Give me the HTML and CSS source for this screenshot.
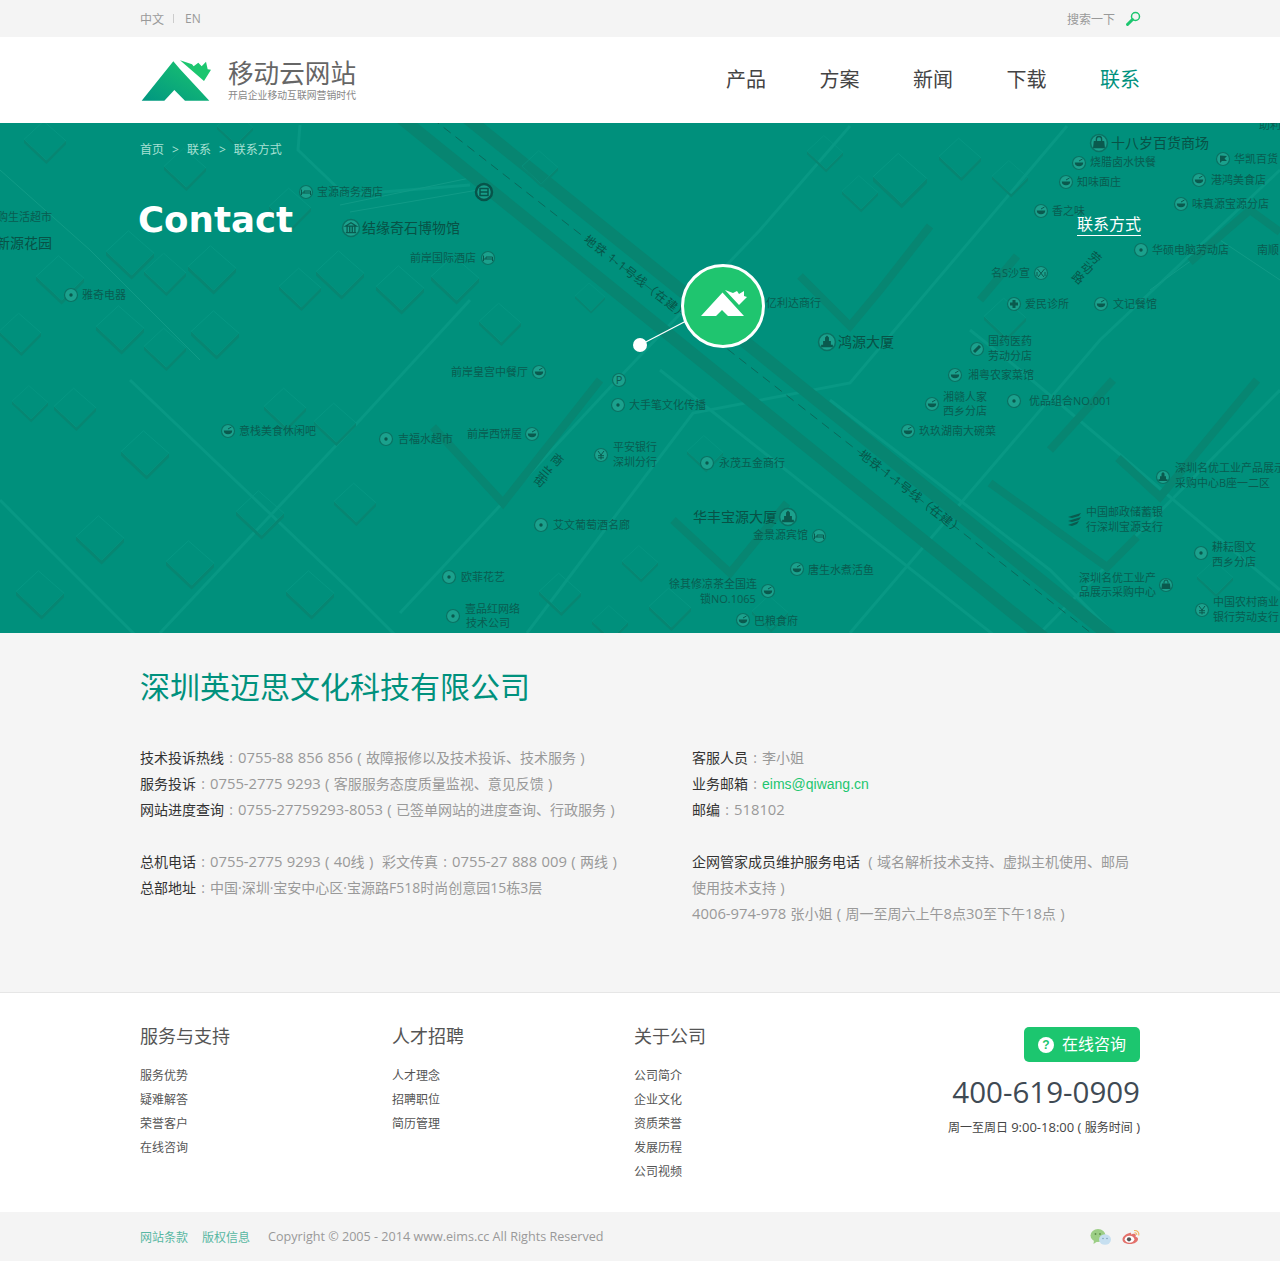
FILE: index.html
```html
<!DOCTYPE html>
<html lang="zh-CN">
<head>
<meta charset="utf-8">
<title>联系方式 - 移动云网站</title>
<link rel="stylesheet" href="styles.css">
</head>
<body>
<div class="topbar">
  <div class="wrap topbar-in">
    <div class="lang"><a>中文</a><i class="sep"></i><a>EN</a></div>
    <div class="search"><span>搜索一下</span>
      <svg class="search-ico" width="16" height="16" viewBox="0 0 16 16"><circle cx="10.500" cy="5.500" r="4" fill="none" stroke="#1cc66f" stroke-width="1.500"/><path d="M7.500 8.500L2.500 13.500" stroke="#1cc66f" stroke-width="3" stroke-linecap="round"/></svg>
    </div>
  </div>
</div>
<header class="header">
  <div class="wrap header-in">
    <a class="logo">
      <svg class="logo-mark" width="72" height="44" viewBox="33 174 216 132">
        <defs><linearGradient id="lg" x1="0" y1="1" x2="1" y2="0"><stop offset="0" stop-color="#009681"/><stop offset="1" stop-color="#1cc66f"/></linearGradient></defs>
        <path fill="url(#lg)" d="M35 299L130 181L149 203L238 299H165L133 267L103 299Z"/>
        <path fill="#1cc66f" d="M150 178L186 190L191 196L205 185L215 196L228 182L233 205L243 206L222 240Z"/>
      </svg>
      <span class="logo-text"><b>移动云网站</b><small>开启企业移动互联网营销时代</small></span>
    </a>
    <nav class="nav"><a>产品</a><a>方案</a><a>新闻</a><a>下载</a><a class="on">联系</a></nav>
  </div>
</header>

<section class="hero">
  <svg class="map" width="1280" height="510" viewBox="0 123 1280 510">
    <defs>
      <g id="b"><path class="b-top" d="M-2 -24L30 4L2 32L-30 2Z"/><path class="b-edge" d="M-30 2V7L2 37L30 9V4L2 32Z"/></g>
      <g id="ic"><circle r="6.500" class="ic-c"/></g>
      <g id="dot"><use href="#ic"/><circle r="1.700" class="gl"/></g>
      <g id="bowl"><use href="#ic"/><path class="gl" d="M-4.200 -.5H4.200A4.200 3.800 0 0 1 -4.200 -.5Z"/><path class="gl-s" d="M0 -2L3.500 -4"/></g>
      <g id="bed"><use href="#ic"/><path class="gl-s" d="M-4.500 -2.500V3M-4.500 1H4.500V3M4.500 1V-1H-2V1"/></g>
      <g id="bldg"><use href="#ic"/><path class="gl" d="M-4.500 4H4.500V2.200H3V-.8H1.500V-3.500L0 -5L-1.500 -3.500V-.8H-3V2.200H-4.500Z"/></g>
      <g id="muse"><use href="#ic"/><path class="gl-s" d="M-4 -1.500L0 -4L4 -1.500ZM-3 -1V3M-1 -1V3M1 -1V3M3 -1V3M-4 3.500H4"/></g>
      <g id="bag"><use href="#ic"/><path class="gl" d="M-4 -1.500H4L4.600 4H-4.600Z"/><path class="gl-s" d="M-2 -1.500V-3A2 2 0 0 1 2 -3V-1.500"/></g>
      <g id="plus"><use href="#ic"/><path class="gl" d="M-1.500 -4H1.500V-1.500H4V1.500H1.500V4H-1.500V1.500H-4V-1.500H-1.500Z"/></g>
      <g id="pill"><use href="#ic"/><path d="M-3 3L3 -3" class="gl-w"/></g>
      <g id="yen"><use href="#ic"/><path class="gl-s" d="M-3 -4L0 0L3 -4M0 0V4.500M-3 .7H3M-3 2.800H3"/></g>
      <g id="flag"><use href="#ic"/><path class="gl" d="M-3 -3.500L4 -3L1.500 -.5L4 2H-1L-3 4Z"/></g>
      <g id="scis"><use href="#ic"/><path class="gl-s" d="M-3.500 -4L3 4M3.500 -4L-3 4M-4 -1V3M4 -1V3"/></g>
      <g id="bus"><circle r="8" class="ic-bus"/><path class="gl-b" d="M-4 -3.500H4V3.500H-4ZM-4 0H4"/></g>
    </defs>

    <g class="road-l">
      <polyline points="400,613 617,380 760,230 850,126"/>
      <polyline points="527,633 693,413 850,383 1067,126"/>
      <polyline points="850,633 1100,340 1280,170"/>
      <polyline points="1040,633 1280,390"/>
      <polyline points="160,633 360,420 470,300"/>
      <polyline points="130,380 350,590 400,640"/>
      <polyline points="0,500 100,600 140,640"/>
      <polyline points="660,370 1000,640"/>
      <polyline points="830,400 1050,570 1120,640"/>
      <polyline points="970,330 1020,370 1280,590"/>
      <polyline points="300,125 298,150 345,195 470,185"/>
    </g>
    <g class="road-t">
      <polyline points="340,205 470,178"/>
      <polyline points="350,212 478,190"/>
      <polyline points="1150,290 1220,240 1280,280"/>
      <polyline points="0,170 90,250 200,360"/>
    </g>

    <g class="band">
      <line x1="400" y1="64" x2="1120" y2="644"/>
      <line x1="380" y1="101" x2="1070" y2="659"/>
    </g>
    <line class="dash" x1="420" y1="109" x2="1100" y2="640"/>

    <g class="wall">
      <polyline points="433,427 503,503 600,380"/>
      <polyline points="673,520 730,573 787,503"/>
      <polyline points="800,276 850,326 880,290 930,226"/>
      <polyline points="980,300 1017,256"/>
      <polyline points="990,483 1107,567 1137,537"/>
      <polyline points="1050,450 1113,380"/>
      <polyline points="1118,458 1160,497 1257,380"/>
      <polyline points="1190,262 1250,210 1280,232"/>
    </g>
    <g>
      <use href="#b" transform="translate(45,138) scale(.7)"/><use href="#b" transform="translate(185,165) scale(.7)"/>
      <use href="#b" transform="translate(235,125) scale(.6)"/><use href="#b" transform="translate(290,205) scale(.7)"/>
      <use href="#b" transform="translate(130,250) scale(.8)"/><use href="#b" transform="translate(165,270) scale(.7)"/>
      <use href="#b" transform="translate(212,265) scale(.8)"/><use href="#b" transform="translate(60,275) scale(.8)"/>
      <use href="#b" transform="translate(20,330) scale(.7)"/><use href="#b" transform="translate(120,325) scale(.8)"/>
      <use href="#b" transform="translate(165,345) scale(.7)"/><use href="#b" transform="translate(215,330) scale(.8)"/>
      <use href="#b" transform="translate(300,285) scale(.7)"/><use href="#b" transform="translate(340,270) scale(.8)"/>
      <use href="#b" transform="translate(400,285) scale(.8)"/><use href="#b" transform="translate(455,275) scale(.8)"/>
      <use href="#b" transform="translate(500,320) scale(.7)"/><use href="#b" transform="translate(75,405) scale(.7)"/>
      <use href="#b" transform="translate(30,400) scale(.6)"/><use href="#b" transform="translate(145,450) scale(.8)"/>
      <use href="#b" transform="translate(285,405) scale(.7)"/><use href="#b" transform="translate(335,420) scale(.7)"/>
      <use href="#b" transform="translate(355,500) scale(.7)"/><use href="#b" transform="translate(260,510) scale(.8)"/>
      <use href="#b" transform="translate(190,560) scale(.8)"/><use href="#b" transform="translate(100,535) scale(.8)"/>
      <use href="#b" transform="translate(40,590) scale(.8)"/><use href="#b" transform="translate(310,590) scale(.8)"/>
      <use href="#b" transform="translate(540,165) scale(.6)"/><use href="#b" transform="translate(590,295) scale(.5)"/>
      <use href="#b" transform="translate(560,590) scale(.7)"/><use href="#b" transform="translate(640,560) scale(.6)"/>
      <use href="#b" transform="translate(670,605) scale(.7)"/><use href="#b" transform="translate(770,610) scale(.6)"/>
      <use href="#b" transform="translate(705,450) scale(.6)"/><use href="#b" transform="translate(610,620) scale(.6)"/>
      <use href="#b" transform="translate(900,175) scale(.9)"/><use href="#b" transform="translate(860,190) scale(.6)"/>
      <use href="#b" transform="translate(960,155) scale(.7)"/><use href="#b" transform="translate(825,150) scale(.6)"/>
      <use href="#b" transform="translate(1005,315) scale(.7)"/><use href="#b" transform="translate(1010,175) scale(.6)"/>
      <use href="#b" transform="translate(1215,575) scale(.6)"/>
    </g>

    <use href="#bed" x="306" y="192"/><use href="#bus" x="484" y="192"/>
    <use href="#muse" transform="translate(351,228) scale(1.300)"/><use href="#bed" x="488" y="258"/>
    <use href="#bag" transform="translate(1099,143) scale(1.300)"/><use href="#bowl" x="1079" y="163"/>
    <use href="#bowl" x="1066" y="182"/><use href="#flag" x="1223" y="159"/>
    <use href="#bowl" x="1199" y="180"/><use href="#bowl" x="1181" y="204"/>
    <use href="#bowl" x="1041" y="211"/><use href="#dot" x="1141" y="250"/>
    <use href="#scis" x="1041" y="273"/><use href="#plus" x="1014" y="304"/>
    <use href="#bowl" x="1101" y="304"/><use href="#bldg" transform="translate(827,342) scale(1.300)"/>
    <use href="#pill" x="977" y="349"/><use href="#bowl" x="955" y="375"/>
    <use href="#bowl" x="932" y="404"/><use href="#dot" x="1014" y="401"/>
    <use href="#bowl" x="908" y="431"/><use href="#dot" x="71" y="295"/>
    <use href="#bowl" x="539" y="372"/><use href="#dot" x="618" y="405"/>
    <use href="#bowl" x="228" y="431"/><use href="#dot" x="386" y="439"/>
    <use href="#bowl" x="532" y="434"/><use href="#yen" x="601" y="455"/>
    <use href="#dot" x="707" y="463"/><use href="#dot" x="541" y="525"/>
    <use href="#bldg" transform="translate(788,517) scale(1.300)"/><use href="#bed" x="819" y="536"/>
    <use href="#bowl" x="797" y="569"/><use href="#bowl" x="768" y="591"/>
    <use href="#bowl" x="743" y="620"/><use href="#dot" x="449" y="577"/>
    <use href="#dot" x="453" y="616"/><use href="#bldg" x="1163" y="477"/>
    <use href="#dot" x="1201" y="553"/><use href="#bag" x="1166" y="585"/>
    <use href="#yen" x="1202" y="610"/><use href="#ic" x="619" y="380"/>
    <path class="gl" d="M1068 517L1081 513L1079 516L1072 518ZM1068 521L1081 517L1079 520L1072 522ZM1068 525L1079 521L1077 524L1072 526Z"/>

    <g class="lb">
      <text x="619" y="384" text-anchor="middle">P</text>
      <text x="317" y="196">宝源商务酒店</text><text x="410" y="262">前岸国际酒店</text>
      <text x="1090" y="166">烧腊卤水快餐</text><text x="1077" y="186">知味面庄</text>
      <text x="1234" y="163">华凯百货</text><text x="1211" y="184">港鸿美食店</text>
      <text x="1192" y="208">味真源宝源分店</text><text x="1052" y="215">香之味</text>
      <text x="1152" y="254">华硕电脑劳动店</text><text x="1257" y="254">南顺</text>
      <text x="991" y="277">名S沙宣</text><text x="1025" y="308">爱民诊所</text>
      <text x="1113" y="308">文记餐馆</text><text x="988" y="345">国药医药</text>
      <text x="988" y="360">劳动分店</text><text x="968" y="379">湘粤农家菜馆</text>
      <text x="943" y="401">湘赣人家</text><text x="943" y="415">西乡分店</text>
      <text x="1029" y="405">优品组合NO.001</text><text x="919" y="435">玖玖湖南大碗菜</text>
      <text x="-3" y="221">购生活超市</text><text x="82" y="299">雅奇电器</text>
      <text x="766" y="307">亿利达商行</text><text x="451" y="376">前岸皇宫中餐厅</text>
      <text x="629" y="409">大手笔文化传播</text><text x="239" y="435">意栈美食休闲吧</text>
      <text x="398" y="443">吉福水超市</text><text x="467" y="438">前岸西饼屋</text>
      <text x="613" y="451">平安银行</text><text x="613" y="466">深圳分行</text>
      <text x="719" y="467">永茂五金商行</text><text x="553" y="529">艾文葡萄酒名廊</text>
      <text x="753" y="539">金景源宾馆</text><text x="808" y="574">唐生水煮活鱼</text>
      <text x="669" y="588">徐其修凉茶全国连</text><text x="700" y="603">锁NO.1065</text>
      <text x="754" y="625">巴粮食府</text><text x="461" y="581">欧菲花艺</text>
      <text x="465" y="613">壹品红网络</text><text x="466" y="627">技术公司</text>
      <text x="1175" y="472">深圳名优工业产品展示</text><text x="1175" y="487">采购中心B座一二区</text>
      <text x="1086" y="516">中国邮政储蓄银</text><text x="1086" y="531">行深圳宝源支行</text>
      <text x="1212" y="551">耕耘图文</text><text x="1212" y="566">西乡分店</text>
      <text x="1079" y="582">深圳名优工业产</text><text x="1079" y="596">品展示采购中心</text>
      <text x="1213" y="606">中国农村商业</text><text x="1213" y="621">银行劳动支行</text>
      <text x="1259" y="129">助利</text>
    </g>
    <g class="lb-big">
      <text x="362" y="233">结缘奇石博物馆</text><text x="1111" y="148">十八岁百货商场</text>
      <text x="838" y="347">鸿源大厦</text><text x="-4" y="248">新源花园</text>
      <text x="693" y="522">华丰宝源大厦</text>
    </g>
    <g class="lb-road">
      <text class="spaced" transform="translate(583,241) rotate(38)">地铁 1-1号线（在建）</text>
      <text class="spaced" transform="translate(858,456) rotate(38)">地铁 1-1号线（在建）</text>
      <text transform="translate(1092.400,261) rotate(40)" text-anchor="middle">劳</text>
      <text transform="translate(1084.400,271) rotate(40)" text-anchor="middle">动</text>
      <text transform="translate(1075.400,281) rotate(40)" text-anchor="middle">路</text>
      <text transform="translate(554.400,463) rotate(40)" text-anchor="middle">商</text>
      <text transform="translate(543.400,475) rotate(40)" text-anchor="middle">兰</text>
      <text transform="translate(537.400,484) rotate(40)" text-anchor="middle">街</text>
    </g>
  </svg>

  <svg class="pin" width="170" height="130" viewBox="0 0 170 130">
    <line x1="42" y1="99" x2="90" y2="74" stroke="#fff" stroke-width="1.300"/>
    <circle cx="42" cy="99" r="7" fill="#fff"/>
    <circle cx="125" cy="60" r="40.500" fill="#1fc56f" stroke="#fff" stroke-width="3"/>
    <path fill="#fff" d="M103 70L124.500 46.500L146 70H130L124 64L118 70Z"/>
    <path fill="#fff" d="M127 44L135 47L139 45L141 48L146 45L146 50L149 51L141 59Z"/>
  </svg>

  <div class="wrap hero-in">
    <div class="crumb"><a>首页</a><i>&gt;</i><a>联系</a><i>&gt;</i><a>联系方式</a></div>
    <div class="hero-row">
      <h1>Contact</h1>
      <a class="hero-link">联系方式</a>
    </div>
  </div>
</section>

<main class="info">
  <div class="wrap">
    <h2>深圳英迈思文化科技有限公司</h2>
    <div class="cols">
      <div class="col">
        <p><b>技术投诉热线</b><span class="c">:</span><span class="n">0755-88 856 856 ( </span>故障报修以及技术投诉、技术服务<span class="n"> )</span></p>
        <p><b>服务投诉</b><span class="c">:</span><span class="n">0755-2775 9293 ( </span>客服服务态度质量监视、意见反馈<span class="n"> )</span></p>
        <p><b>网站进度查询</b><span class="c">:</span><span class="n">0755-27759293-8053 ( </span>已签单网站的进度查询、行政服务<span class="n"> )</span></p>
        <p class="gap"><b>总机电话</b><span class="c">:</span><span class="n">0755-2775 9293 ( 40</span>线<span class="n"> ) &nbsp;</span>彩文传真<span class="c">:</span><span class="n">0755-27 888 009 ( </span>两线<span class="n"> )</span></p>
        <p><b>总部地址</b><span class="c">:</span>中国·深圳·宝安中心区·宝源路F518时尚创意园15栋3层</p>
      </div>
      <div class="col">
        <p><b>客服人员</b><span class="c">:</span>李小姐</p>
        <p><b>业务邮箱</b><span class="c">:</span><a class="mail">eims@qiwang.cn</a></p>
        <p><b>邮编</b><span class="c">:</span><span class="n">518102</span></p>
        <p class="gap"><b class="long">企网管家成员维护服务电话</b><span class="n"> ( </span>域名解析技术支持、虚拟主机使用、邮局使用技术支持<span class="n"> )</span></p>
        <p><span class="n">4006-974-978 </span>张小姐<span class="n"> ( </span>周一至周六上午<span class="n">8</span>点<span class="n">30</span>至下午<span class="n">18</span>点<span class="n"> )</span></p>
      </div>
    </div>
  </div>
</main>

<footer class="footer">
  <div class="wrap footer-in">
    <div class="fcol f1"><h3>服务与支持</h3><ul><li>服务优势</li><li>疑难解答</li><li>荣誉客户</li><li>在线咨询</li></ul></div>
    <div class="fcol f2"><h3>人才招聘</h3><ul><li>人才理念</li><li>招聘职位</li><li>简历管理</li></ul></div>
    <div class="fcol f3"><h3>关于公司</h3><ul><li>公司简介</li><li>企业文化</li><li>资质荣誉</li><li>发展历程</li><li>公司视频</li></ul></div>
    <div class="contact">
      <a class="btn"><span class="q">?</span><span class="btn-t">在线咨询</span></a>
      <div class="phone">400-619-0909</div>
      <div class="hours">周一至周日 <span class="n2">9:00-18:00 ( </span>服务时间<span class="n2"> )</span></div>
    </div>
  </div>
</footer>
<div class="bottom">
  <div class="wrap bottom-in">
    <a class="blink">网站条款</a><a class="blink">版权信息</a>
    <span class="copy">Copyright © 2005 - 2014 www.eims.cc All Rights Reserved</span>
    <div class="social">
      <svg width="22" height="18" viewBox="0 0 22 18"><ellipse cx="8" cy="7.500" rx="7.500" ry="6.500" fill="#9cce85"/><path d="M4 12L3.500 16L8 13Z" fill="#9cce85"/><circle cx="5.500" cy="6" r=".9" fill="#5f8f4c"/><circle cx="10" cy="6" r=".9" fill="#5f8f4c"/><ellipse cx="15" cy="11.500" rx="6" ry="5.200" fill="#c6dff0"/><circle cx="13" cy="10.500" r=".8" fill="#7ea4bd"/><circle cx="17" cy="10.500" r=".8" fill="#7ea4bd"/></svg>
      <svg width="19" height="17" viewBox="0 0 19 17"><path d="M7.500 5C3.500 6 .5 9 .5 11.500C.5 14.500 4 16 8 16C12.500 16 16 13.800 16 11C16 9.500 14.500 9 13.500 8.700C14 7.500 14 6.500 13 6C12 5.500 10 6 9 6.500C9.500 5 9 4.500 7.500 5Z" fill="#e3716c"/><ellipse cx="7.500" cy="11.300" rx="4.800" ry="3.500" fill="#fff"/><circle cx="7" cy="11.300" r="2.100" fill="#555"/><path d="M12 2.500C15 2 17.500 4.500 16.800 7.500M12.500 4.800C14 4.500 15 5.700 14.700 7" fill="none" stroke="#f2b55e" stroke-width="1.100"/></svg>
    </div>
  </div>
</div>
</body>
</html>
```
FILE: styles.css
```css
* { box-sizing: border-box; }
html, body { margin: 0; padding: 0; }
body { font-family: "Open Sans", "Noto Sans CJK SC", sans-serif; background: #fff; color: #333; }
a { color: inherit; text-decoration: none; }
p, h1, h2, h3, ul { margin: 0; padding: 0; }
ul { list-style: none; }
.wrap { width: 1000px; margin: 0 auto; position: relative; }

.topbar { height: 37px; background: #f4f4f4; font-size: 12px; color: #999; }
.topbar-in { height: 37px; display: flex; align-items: center; justify-content: space-between; }
.lang { display: flex; align-items: center; }
.sep { width: 1px; height: 9px; background: #ccc; margin: 0 11px 0 9px; }
.search { display: flex; align-items: center; gap: 10px; margin-right: -1px; }

.header { height: 86px; background: #fff; }
.header-in { height: 86px; display: flex; align-items: center; justify-content: space-between; }
.logo { display: flex; align-items: center; }
.logo-mark { display: block; margin: 1px 15px 0 1px; }
.logo-text { display: flex; flex-direction: column; }
.logo-text b { font-weight: 400; font-size: 25.600px; line-height: 32px; color: #666; }
.logo-text small { font-size: 9.850px; line-height: 14px; color: #888; margin-top: -2px; }
.nav { display: flex; gap: 53.500px; font-size: 20px; line-height: 30px; color: #444; }
.nav .on { color: #00917d; }

.hero { position: relative; height: 510px; background: #00907c; overflow: hidden; }
.map { position: absolute; left: 0; top: 0; display: block; }
.pin { position: absolute; left: 598px; top: 123px; z-index: 2; }
.hero-in { padding-top: 17px; z-index: 1; }
.crumb { display: flex; font-size: 12px; line-height: 20px; color: #a8e0d4; }
.crumb i { font-style: normal; margin: 0 8px; }
.hero-row { display: flex; justify-content: space-between; align-items: flex-end; margin-top: 38px; }
h1 { font: 700 35.600px/44px "DejaVu Sans", sans-serif; color: #fff; margin-left: -2px; }
.hero-link { font-size: 16px; line-height: 21px; color: #fff; border-bottom: 1px solid #fff; margin: 0 -1px 6px 0; }

.b-top { fill: none; stroke: #089985; stroke-width: 1; }
.b-edge { fill: #078672; }
.road-l polyline { fill: none; stroke: #089884; stroke-width: 3; }
.road-t polyline { fill: none; stroke: #109b87; stroke-width: 1; }
.band line { stroke: #078571; stroke-width: 12.500; }
.dash { stroke: #0a6a5b; stroke-width: 1; stroke-dasharray: 9 6; }
.wall polyline { fill: none; stroke: #078672; stroke-width: 8; }
.ic-c { fill: #1ba18d; stroke: #0a7263; stroke-width: 1.200; }
.ic-bus { fill: #179d89; stroke: #07544a; stroke-width: 2.500; }
.gl { fill: #0a5a4e; }
.gl-s { fill: none; stroke: #0a5a4e; stroke-width: 1; }
.gl-b { fill: none; stroke: #07544a; stroke-width: 1.500; }
.gl-w { fill: none; stroke: #0a5a4e; stroke-width: 3; }
.lb text { font-size: 11px; fill: #0a5c50; }
.lb-big text { font-size: 14px; fill: #085246; }
.lb-road text { font-size: 12px; fill: #075649; }
.lb-road .spaced { letter-spacing: 1px; }

.info { background: #f5f5f5; padding: 34px 0 65px; }
h2 { font-weight: 400; font-size: 30px; line-height: 40px; color: #00917d; }
.cols { display: flex; margin-top: 38px; font-size: 14px; line-height: 26px; color: #999; }
.col { width: 552px; }
.col:last-child { width: 448px; }
.col b { font-weight: 400; color: #333; }
.col .long { margin-right: 4px; }
.c { display: inline-block; width: 14px; line-height: 0; text-align: center; }
.n { font-size: 14.800px; line-height: 0; word-spacing: .5px; }
.gap { margin-top: 26px; }
.mail { color: #1cc66f; font-family: "Liberation Sans", sans-serif; line-height: 0; }

.footer { border-top: 1px solid #e6e6e6; background: #fff; height: 220px; padding-top: 30px; }
.footer-in { display: flex; }
.fcol h3 { font-weight: 400; font-size: 18px; line-height: 26px; color: #555; }
.fcol ul { margin-top: 15px; font-size: 12px; line-height: 24px; color: #555; }
.f1 { width: 252px; }
.f2 { width: 242px; }
.contact { margin-left: auto; margin-top: 4px; display: flex; flex-direction: column; align-items: flex-end; }
.btn { display: flex; align-items: center; width: 116px; height: 35px; padding-left: 14px; border-radius: 5px; background: #1cc66f; color: #fff; font-size: 16px; }
.btn-t { margin-top: -3px; }
.q { width: 16px; height: 16px; border-radius: 50%; background: #fff; color: #1cc66f; font: 700 12px/16px "Liberation Sans", sans-serif; text-align: center; margin-right: 8px; }
.phone { margin-top: 10px; font-size: 29.500px; line-height: 40px; color: #3f4a54; }
.hours { margin-top: 6px; font-size: 12px; line-height: 20px; color: #444; }
.n2 { font-size: 13px; line-height: 0; }

.bottom { height: 49px; background: #f4f4f4; }
.bottom-in { height: 49px; display: flex; align-items: center; font-size: 12px; }
.blink { color: #57b7a2; margin-right: 14px; }
.copy { margin-left: 4px; font-size: 12.600px; color: #999; }
.social { margin: 0 -1px 0 auto; display: flex; align-items: center; gap: 10px; }
.social svg { display: block; }
```
